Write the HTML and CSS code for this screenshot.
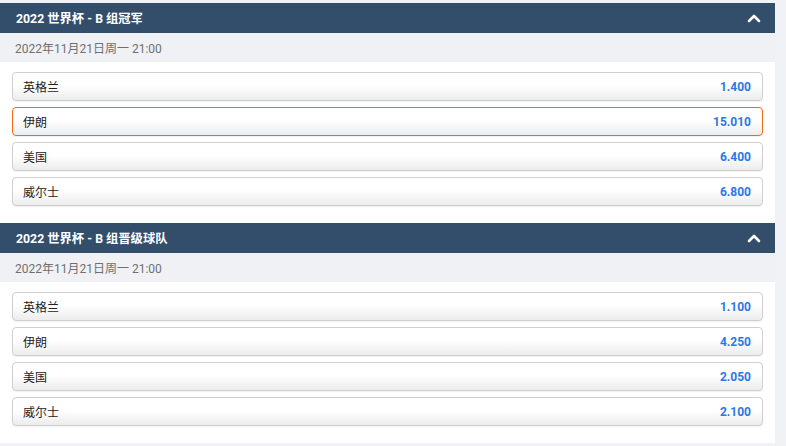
FILE: index.html
```html
<!DOCTYPE html>
<html lang="zh-CN">
  <head>
    <meta charset="UTF-8" />
    <meta name="viewport" content="width=device-width, initial-scale=1.0" />
    <title>2022 世界杯 - B 组</title>
    <link rel="stylesheet" href="styles.css">
  </head>
  <body>
    <section class="market">
      <div class="market-head">
        <span>2022 世界杯 - B 组冠军</span>
        <svg class="toggle" width="14" height="10" viewBox="0 0 14 10">
          <polyline points="2,8 7,3 12,8" />
        </svg>
      </div>
      <div class="market-date">2022年11月21日周一 21:00</div>
      <ul class="odds">
        <li><span>英格兰</span><b>1.400</b></li>
        <li class="selected"><span>伊朗</span><b>15.010</b></li>
        <li><span>美国</span><b>6.400</b></li>
        <li><span>威尔士</span><b>6.800</b></li>
      </ul>
    </section>

    <section class="market">
      <div class="market-head">
        <span>2022 世界杯 - B 组晋级球队</span>
        <svg class="toggle" width="14" height="10" viewBox="0 0 14 10">
          <polyline points="2,8 7,3 12,8" />
        </svg>
      </div>
      <div class="market-date">2022年11月21日周一 21:00</div>
      <ul class="odds">
        <li><span>英格兰</span><b>1.100</b></li>
        <li><span>伊朗</span><b>4.250</b></li>
        <li><span>美国</span><b>2.050</b></li>
        <li><span>威尔士</span><b>2.100</b></li>
      </ul>
    </section>
  </body>
</html>
```

FILE: styles.css
```css
* {
  box-sizing: border-box;
}

body {
  margin: 0;
  padding-top: 3px;
  background: #f0f2f6;
  font-family: Roboto, "Noto Sans CJK SC", sans-serif;
  font-size: 12px;
  color: #333;
}

.market {
  width: 775px;
}

.market-head {
  height: 30px;
  padding: 0 14px 0 16px;
  display: flex;
  align-items: center;
  justify-content: space-between;
  background: #334e6b;
  color: #fff;
  font-size: 12.3px;
  font-weight: bold;
}

.toggle polyline {
  fill: none;
  stroke: #fff;
  stroke-width: 2.6;
  stroke-linecap: round;
  stroke-linejoin: round;
}

.market-date {
  height: 29px;
  padding-left: 15px;
  display: flex;
  align-items: center;
  background: #eff1f5;
  color: #6f6f6f;
  font-size: 12px;
}

.odds {
  list-style: none;
  margin: 0;
  padding: 10px 12px 17px;
  background: #fff;
  display: flex;
  flex-direction: column;
  gap: 6px;
}

.odds li {
  height: 29px;
  padding: 0 11px 0 10px;
  display: flex;
  align-items: center;
  justify-content: space-between;
  border: 1px solid #cfcfcf;
  border-radius: 4px;
  background: linear-gradient(#fff 45%, #ececec);
  box-shadow: 0 1px 1px rgba(0, 0, 0, 0.06);
  color: #222;
}

.odds li.selected {
  border-color: #f26a10;
}

.odds b {
  color: #2a78e4;
  font-weight: bold;
}
```
